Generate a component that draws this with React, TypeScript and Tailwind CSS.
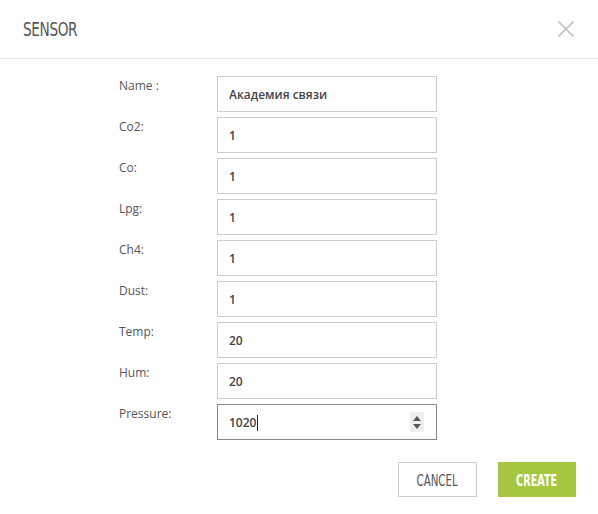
const fields = [
  { label: 'Name :', value: 'Академия связи' },
  { label: 'Co2:', value: '1' },
  { label: 'Co:', value: '1' },
  { label: 'Lpg:', value: '1' },
  { label: 'Ch4:', value: '1' },
  { label: 'Dust:', value: '1' },
  { label: 'Temp:', value: '20' },
  { label: 'Hum:', value: '20' },
]

const condensed = "font-['DejaVu_Sans_Condensed','DejaVu_Sans',sans-serif]"

export default function App() {
  return (
    <div className="w-[598px] h-[514px] bg-white font-['Open_Sans',sans-serif]">
      {/* Header */}
      <div className="h-[59px] flex items-center justify-between pl-[23px] pr-[24px] border-b border-[#e8e8e8]">
        <h2 className={`${condensed} text-[20px] text-[#555] tracking-[-0.5px] origin-left scale-x-[0.76]`}>SENSOR</h2>
        <svg width="16" height="16" viewBox="0 0 16 16" className="mt-[-1px]">
          <path d="M0.5 0.5 L15.5 15.5 M15.5 0.5 L0.5 15.5" stroke="#c4c4c4" strokeWidth="1.6" />
        </svg>
      </div>

      {/* Form */}
      <div className="pt-[17px] flex flex-col gap-[5px]">
        {fields.map((f) => (
          <div key={f.label} className="flex pl-[119px]">
            <label className="w-[98px] pt-[1px] text-[12px] text-[#555]">{f.label}</label>
            <input
              readOnly
              defaultValue={f.value}
              className="w-[220px] h-[36px] border border-[#ccc] px-[11px] pt-[1px] text-[12px] font-semibold text-[#444] outline-none"
            />
          </div>
        ))}
        <div className="flex pl-[119px]">
          <label className="w-[98px] pt-[1px] text-[12px] text-[#555]">Pressure:</label>
          <div className="w-[220px] h-[36px] border border-[#888] pl-[11px] pr-[12px] pt-[1px] flex items-center justify-between">
            <span className="flex items-center text-[12px] font-semibold text-[#444]">
              1020
              <span className="ml-[1px] w-px h-[16px] bg-[#222]" />
            </span>
            <span className="w-[14px] h-[20px] bg-[#eee] flex flex-col items-center justify-center gap-[3px] -mt-[1px]">
              <svg width="8" height="5" viewBox="0 0 8 5"><path d="M0 5 L4 0 L8 5 Z" fill="#555" /></svg>
              <svg width="8" height="5" viewBox="0 0 8 5"><path d="M0 0 L4 5 L8 0 Z" fill="#555" /></svg>
            </span>
          </div>
        </div>
      </div>

      {/* Footer */}
      <div className="mt-[22px] flex justify-end gap-[21px] pr-[22px]">
        <button className={`w-[79px] h-[35px] pt-[3px] border border-[#ccc] text-[#555] ${condensed} text-[15px]`}>
          <span className="inline-block scale-x-[0.76]">CANCEL</span>
        </button>
        <button className={`w-[78px] h-[35px] pt-[3px] bg-[#a5c640] text-white font-bold ${condensed} text-[15px]`}>
          <span className="inline-block scale-x-[0.72]">CREATE</span>
        </button>
      </div>
    </div>
  )
}
